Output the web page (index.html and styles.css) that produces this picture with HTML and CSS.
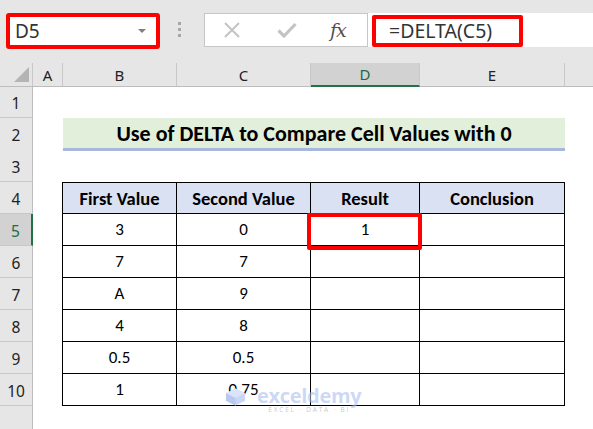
FILE: index.html
```html
<!DOCTYPE html>
<html>
<head>
<meta charset="utf-8">
<link rel="stylesheet" href="styles.css">
</head>
<body>
<div class="app">
  <div class="toolbar">
    <div class="namebox"><span class="nb-text">D5</span><span class="nb-arrow"></span></div>
    <div class="dots"><i></i><i></i><i></i></div>
    <div class="fxbox">
      <svg class="ico-x" width="18" height="16" viewBox="0 0 18 16"><path d="M2 1 L16 15 M16 1 L2 15" stroke="#c4c4c4" stroke-width="2" fill="none"/></svg>
      <svg class="ico-check" width="20" height="16" viewBox="0 0 20 16"><path d="M1.5 8.5 L7 14 L18.5 2" stroke="#c4c4c4" stroke-width="3.2" fill="none"/></svg>
      <span class="ico-fx">fx</span>
    </div>
    <div class="formula"><div class="fbox">=DELTA(C5)</div></div>
  </div>

  <div class="sheet">
    <div class="row colhead">
      <div class="corner"><span class="tri"></span></div>
      <div class="ch">A</div><div class="ch">B</div><div class="ch">C</div><div class="ch sel">D</div><div class="ch">E</div><div class="ch last"></div>
    </div>
    <div class="row r1"><div class="rh">1</div></div>
    <div class="row"><div class="rh">2</div><div class="sp"></div><div class="title">Use of DELTA to Compare Cell Values with 0</div></div>
    <div class="row"><div class="rh">3</div></div>
    <div class="row"><div class="rh">4</div><div class="sp"></div><div class="c th first top">First Value</div><div class="c th top">Second Value</div><div class="c th top">Result</div><div class="c th top">Conclusion</div></div>
    <div class="row"><div class="rh rsel">5</div><div class="sp"></div><div class="c first">3</div><div class="c">0</div><div class="c">1</div><div class="c"></div></div>
    <div class="row"><div class="rh">6</div><div class="sp"></div><div class="c first">7</div><div class="c">7</div><div class="c"></div><div class="c"></div></div>
    <div class="row"><div class="rh">7</div><div class="sp"></div><div class="c first">A</div><div class="c">9</div><div class="c"></div><div class="c"></div></div>
    <div class="row"><div class="rh">8</div><div class="sp"></div><div class="c first">4</div><div class="c">8</div><div class="c"></div><div class="c"></div></div>
    <div class="row"><div class="rh">9</div><div class="sp"></div><div class="c first">0.5</div><div class="c">0.5</div><div class="c"></div><div class="c"></div></div>
    <div class="row"><div class="rh">10</div><div class="sp"></div><div class="c first">1</div><div class="c">0.75</div><div class="c"></div><div class="c"></div></div>
    <div class="row rest"><div class="rh"></div></div>

    <div class="selbox"></div>
    <div class="watermark">
      <svg class="wm-logo" width="21" height="20" viewBox="0 0 22 20"><path d="M11 1 L21 6 L21 14 L11 19 L1 14 L1 6 Z" fill="#c9d6f5"/><path d="M11 1 L21 6 L11 11 L1 6 Z" fill="#dbe4fa"/><path d="M11 11 L11 19 L1 14 L1 6 Z" fill="#b9c9f0"/></svg>
      <div class="wm-text"><span class="wm-name">exceldemy</span><span class="wm-sub">EXCEL · DATA · BI</span></div>
    </div>
  </div>
</div>
</body>
</html>
```

FILE: styles.css
```css
* { box-sizing: border-box; }
html, body { margin: 0; padding: 0; }
body { width: 593px; height: 429px; overflow: hidden; background: #fff; font-family: Carlito, Lato, "Liberation Sans", sans-serif; }
.app { width: 593px; height: 429px; display: flex; flex-direction: column; }

.toolbar { height: 63px; background: #e6e6e6; display: flex; align-items: flex-start; padding-top: 13px; }
.namebox { margin-left: 6px; width: 154px; height: 36px; border: 4px solid #ff0000; border-radius: 3px; background: #fff; display: flex; align-items: center; justify-content: space-between; padding: 0 10px 0 5px; }
.nb-text { font-family: "Noto Sans", "Open Sans", sans-serif; font-size: 19px; color: #333; }
.nb-arrow { width: 0; height: 0; border-left: 4px solid transparent; border-right: 4px solid transparent; border-top: 4px solid #808080; }
.dots { margin-left: 18px; width: 4px; display: flex; flex-direction: column; gap: 3px; padding-top: 9px; }
.dots i { display: block; width: 3px; height: 3px; background: #a6a6a6; }
.fxbox { margin-left: 22px; width: 164px; height: 34px; border: 1px solid #c6c6c6; background: #fff; display: flex; align-items: center; }
.ico-x { margin-left: 18px; }
.ico-check { margin-left: 36px; }
.ico-fx { margin-left: 33px; font-family: "DejaVu Serif", "Liberation Serif", serif; font-style: italic; font-size: 19px; color: #505050; letter-spacing: -1px; }
.formula { flex: 1; height: 34px; background: #fff; padding: 2px 0 0 4px; }
.fbox { width: 151px; height: 32px; border: 4px solid #ff0000; border-radius: 2px; padding-left: 13px; font-family: "Noto Sans", "Open Sans", sans-serif; font-size: 19.5px; color: #333; line-height: 23px; white-space: nowrap; }

.sheet { position: relative; flex: 1; display: flex; flex-direction: column; }
.row { display: grid; grid-template-columns: 33px 30px 114px 134px 109px 145px 1fr; height: 32px; }
.row.r1 { height: 31px; }
.row.rest { flex: 1; height: auto; }
.colhead { height: 24px; background: #e6e6e6; border-bottom: 1px solid #bdbdbd; }
.corner { position: relative; border-right: 1px solid #c8c8c8; }
.tri { position: absolute; right: 3px; bottom: 4px; width: 0; height: 0; border-left: 15px solid transparent; border-bottom: 15px solid #b4b4b4; }
.ch { border-right: 1px solid #c8c8c8; display: flex; align-items: center; justify-content: center; font-family: "Noto Sans", "Open Sans", sans-serif; font-size: 15px; color: #222; }
.ch.last { border-right: none; }
.ch.sel { background: #d2d2d2; color: #1b6a44; border-bottom: 2px solid #217346; margin-bottom: -1px; }

.rh { background: #e6e6e6; border-right: 1px solid #bdbdbd; border-bottom: 1px solid #c8c8c8; display: flex; align-items: center; justify-content: center; padding-top: 2px; font-family: "Noto Sans", "Open Sans", sans-serif; font-size: 15.5px; color: #222; }
.rest .rh { border-bottom: none; }
.rh.rsel { background: #d2d2d2; color: #1b6a44; border-right: 2px solid #217346; }

.title { grid-column: 3 / 7; background: #e2efda; border-bottom: 3px solid #a6b8de; height: 33px; display: flex; align-items: center; justify-content: center; font-weight: bold; font-size: 22px; color: #000; white-space: nowrap; }

.c { border-right: 1px solid #000; border-bottom: 1px solid #000; display: flex; align-items: center; justify-content: center; font-size: 17px; color: #000; }
.c.first { border-left: 1px solid #000; margin-left: -1px; }
.c.top { border-top: 1px solid #000; }
.c.th { background: #d9e1f2; font-weight: bold; font-size: 18.5px; white-space: nowrap; }

.selbox { position: absolute; left: 307px; top: 150px; width: 115px; height: 37px; border: 4px solid #ff0000; border-radius: 2px; }

.watermark { position: absolute; left: 225px; top: 324px; display: flex; align-items: flex-start; gap: 11px; }
.wm-logo { margin-top: 0; }
.wm-text { display: flex; flex-direction: column; align-items: center; }
.wm-name { font-family: "Open Sans", sans-serif; font-weight: bold; font-size: 20px; line-height: 18px; color: rgba(170,192,240,0.6); letter-spacing: -0.3px; }
.wm-sub { font-family: "Open Sans", sans-serif; font-size: 6.5px; line-height: 7px; letter-spacing: 1.8px; color: rgba(160,160,160,0.6); margin-top: 1px; }
```
